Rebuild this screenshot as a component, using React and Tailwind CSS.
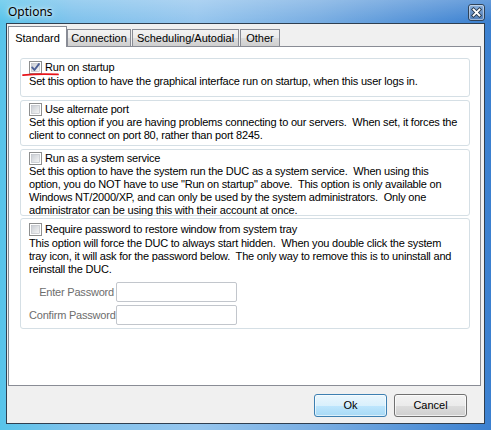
import React from "react";

const ui = "font-['Liberation_Sans',Arial,sans-serif] text-[11px] text-black";

function CheckBox({ checked }) {
  return (
    <svg width="13" height="13" viewBox="0 0 13 13" className="shrink-0 block">
      <defs>
        <linearGradient id="cbg" x1="0" y1="0" x2="1" y2="1">
          <stop offset="0" stopColor="#c9cdd3" />
          <stop offset="1" stopColor="#f7f7f7" />
        </linearGradient>
      </defs>
      <rect x="0.5" y="0.5" width="12" height="12" fill="#ffffff" stroke="#8e8f8f" />
      <rect x="2.5" y="2.5" width="8" height="8" fill="url(#cbg)" stroke="#b6bac0" strokeWidth="0.6" />
      {checked && (
        <path d="M3.2 6.4 L5.4 9 L9.9 3.1" fill="none" stroke="#4b5f96" strokeWidth="1.9" strokeLinecap="round" strokeLinejoin="round" />
      )}
    </svg>
  );
}

function Line({ children }) {
  return <div className="whitespace-pre leading-[13px] h-[13px] tracking-[-0.2px]">{children}</div>;
}

function Group({ className, label, checked, lines, children, headerH = "h-[14px]", underline }) {
  return (
    <div className={`rounded-[3px] border border-[#d5dfe5] bg-white pl-[8px] ${className}`}>
      <div className={`relative flex items-center gap-[3px] ${headerH}`}>
        <CheckBox checked={checked} />
        <span className="whitespace-pre leading-[13px] tracking-[-0.2px]">{label}</span>
        {underline && (
          <svg className="absolute left-[-7px] top-[12px]" width="38" height="5" viewBox="0 0 38 5">
            <path d="M1 3.2 C8 2.4 20 1.6 36 2.4" fill="none" stroke="#e8141a" strokeWidth="1.8" strokeLinecap="round" />
          </svg>
        )}
      </div>
      {lines.map((l, i) => (
        <Line key={i}>{l}</Line>
      ))}
      {children}
    </div>
  );
}

function CloseButton() {
  return (
    <svg width="17" height="17" viewBox="0 0 17 17" className="block">
      <defs>
        <linearGradient id="clb" x1="0" y1="0" x2="0" y2="1">
          <stop offset="0" stopColor="#8fb3dc" />
          <stop offset="0.5" stopColor="#6a93c6" />
          <stop offset="1" stopColor="#4e7cb7" />
        </linearGradient>
      </defs>
      <rect x="0.5" y="0.5" width="16" height="16" rx="2.5" fill="url(#clb)" stroke="#2f4258" />
      <rect x="1.5" y="1.5" width="14" height="14" rx="1.5" fill="none" stroke="rgba(255,255,255,0.45)" />
      <path d="M5.5 5.5 L11.5 11.5 M11.5 5.5 L5.5 11.5" stroke="#25364a" strokeWidth="3.6" strokeLinecap="square" />
      <path d="M5.5 5.5 L11.5 11.5 M11.5 5.5 L5.5 11.5" stroke="#ffffff" strokeWidth="1.8" strokeLinecap="square" />
    </svg>
  );
}

function Tab({ label, selected, className = "" }) {
  if (selected) {
    return (
      <div
        className={`relative z-10 -mb-px flex h-[21px] items-start justify-center border border-b-0 border-[#898c95] bg-white pt-[3px] ${className}`}
      >
        {label}
      </div>
    );
  }
  return (
    <div
      className={`flex h-[17px] items-center justify-center border border-b-0 border-[#898c95] bg-[linear-gradient(180deg,#f2f2f2_0%,#ebebeb_50%,#dddddd_50%,#cfcfcf_100%)] pt-[1px] ${className}`}
    >
      {label}
    </div>
  );
}

export default function App() {
  return (
    <div
      className={`${ui} flex h-[430px] w-[491px] flex-col bg-[linear-gradient(180deg,rgba(255,255,255,0.22)_0%,rgba(255,255,255,0)_5%),linear-gradient(90deg,#58c4ea_0%,#7fc2ec_15%,#96c6ee_40%,#78ade2_65%,#3b80d0_100%)] px-[6px] pb-[6px]`}
    >
      {/* Title bar */}
      <div className="flex h-[23px] shrink-0 items-start justify-between">
        <span className="mt-[4px] pl-[2px] font-['Noto_Sans',sans-serif] text-[12px] leading-[16px] text-black [text-shadow:0_0_8px_rgba(255,255,255,0.95),0_0_3px_rgba(255,255,255,0.9)]">
          Options
        </span>
        <div className="mt-[4px]">
          <CloseButton />
        </div>
      </div>

      {/* Client area */}
      <div className="flex flex-1 flex-col border border-[#2f3f50] bg-[#f0f0f0] pt-[2px]">
        {/* Tabs */}
        <div className="ml-[1px] flex h-[20px] items-end">
          <Tab label="Standard" selected className="w-[59px]" />
          <Tab label="Connection" className="w-[64px]" />
          <Tab label="Scheduling/Autodial" className="ml-[1px] w-[107px]" />
          <Tab label="Other" className="ml-[1px] w-[40px]" />
        </div>

        {/* Panel */}
        <div className="ml-[1px] mr-[3px] flex h-[340px] flex-col border border-[#898c95] bg-white pl-[11px] pr-[10px] pt-[11px]">
          <Group
            className="h-[39px] pt-[1px]"
            checked
            underline
            label="Run on startup"
            headerH="h-[15px]"
            lines={["Set this option to have the graphical interface run on startup, when this user logs in."]}
          />
          <Group
            className="mt-[3px] h-[46px] pt-[1px]"
            label="Use alternate port"
            lines={[
              "Set this option if you are having problems connecting to our servers.  When set, it forces the",
              "client to connect on port 80, rather than port 8245.",
            ]}
          />
          <Group
            className="mt-[3px] h-[67px] pt-[1px]"
            label="Run as a system service"
            lines={[
              "Set this option to have the system run the DUC as a system service.  When using this",
              'option, you do NOT have to use "Run on startup" above.  This option is only available on',
              "Windows NT/2000/XP, and can only be used by the system administrators.  Only one",
              "administrator can be using this with their account at once.",
            ]}
          />
          <Group
            className="mt-[2px] h-[111px] pt-[3px]"
            label="Require password to restore window from system tray"
            headerH="h-[15px]"
            lines={[
              "This option will force the DUC to always start hidden.  When you double click the system",
              "tray icon, it will ask for the password below.  The only way to remove this is to uninstall and",
              "reinstall the DUC.",
            ]}
          >
            <div className="mt-[6px] flex flex-col gap-[3px]">
              <div className="flex items-center gap-[2px]">
                <span className="w-[85px] whitespace-nowrap text-right tracking-[-0.2px] text-[#6d6d6d]">Enter Password</span>
                <div className="h-[20px] w-[121px] rounded-[2px] border border-[#c2c6cc] bg-white" />
              </div>
              <div className="flex items-center gap-[2px]">
                <span className="w-[85px] whitespace-nowrap text-right tracking-[-0.2px] text-[#6d6d6d]">Confirm Password</span>
                <div className="h-[20px] w-[121px] rounded-[2px] border border-[#c2c6cc] bg-white" />
              </div>
            </div>
          </Group>
        </div>

        {/* Buttons */}
        <div className="mt-[8px] flex justify-end gap-[7px] pr-[17px]">
          <button className="flex h-[23px] w-[73px] items-center justify-center rounded-[3px] border border-[#3c7fb1] bg-[linear-gradient(180deg,#eaf6fd_0%,#d9f0fc_50%,#bee6fd_50%,#a7d9f5_100%)] shadow-[inset_0_0_0_1px_rgba(255,255,255,0.6)]">
            Ok
          </button>
          <button className="flex h-[23px] w-[73px] items-center justify-center rounded-[3px] border border-[#707070] bg-[linear-gradient(180deg,#f2f2f2_0%,#ebebeb_50%,#dddddd_50%,#cfcfcf_100%)] shadow-[inset_0_0_0_1px_rgba(255,255,255,0.7)]">
            Cancel
          </button>
        </div>
      </div>
    </div>
  );
}
